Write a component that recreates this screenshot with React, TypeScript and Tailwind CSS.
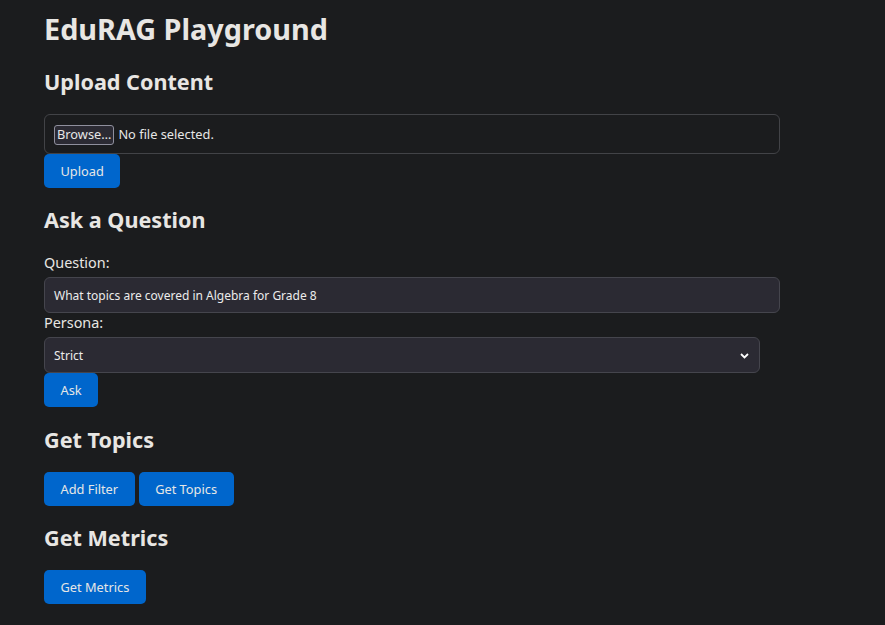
import React from "react";

const font = { fontFamily: '"Noto Sans", "Open Sans", sans-serif' };

function Btn({ children }: { children: React.ReactNode }) {
  return (
    <button className="h-[34px] px-[16.5px] rounded-[5px] bg-[#0066cc] text-[12.8px] text-[#e6e6e6] leading-none">
      {children}
    </button>
  );
}

export default function App() {
  return (
    <div className="min-h-[625px] w-full bg-[#1b1c1e] text-[#e8e6e3]" style={font}>
      <div className="px-[44px] pt-[12px] w-[780px] box-content">
        <h1 className="text-[28.8px] font-bold leading-[34px]">EduRAG Playground</h1>

        <h2 className="mt-[22px] text-[21.6px] font-bold leading-[28px]">Upload Content</h2>
        <div className="mt-[18px] h-[40px] w-[736px] rounded-[6px] border border-[#424347] flex items-center pt-[2px] px-[9px] text-[12.8px]">
          <span className="h-[20px] px-[2px] rounded-[3px] border border-[#8f8f9d] bg-[#2b2a33] flex items-center text-[#e6e6e6]">
            Browse…
          </span>
          <span className="ml-[4px] text-[#e6e6e6]">No file selected.</span>
        </div>
        <Btn>Upload</Btn>

        <h2 className="mt-[18px] text-[21.6px] font-bold leading-[28px]">Ask a Question</h2>
        <div className="mt-[19px] text-[14.4px] leading-[20px]">Question:</div>
        <div className="mt-[4px] h-[36px] w-[736px] rounded-[6px] border border-[#45454d] bg-[#2b2a33] flex items-center pt-[2px] px-[9px] text-[12px] text-[#ececec]">
          What topics are covered in Algebra for Grade 8
        </div>
        <div className="text-[14.4px] leading-[20px]">Persona:</div>
        <div className="mt-[4px] h-[36px] w-[716px] rounded-[6px] border border-[#45454d] bg-[#2b2a33] flex items-center justify-between pt-[2px] pl-[9px] pr-[10px] text-[12px] text-[#ececec]">
          <span>Strict</span>
          <svg width="9" height="6" viewBox="0 0 9 6">
            <path d="M1 1 L4.5 4.5 L8 1" stroke="#ffffff" strokeWidth="1.8" fill="none" />
          </svg>
        </div>
        <Btn>Ask</Btn>

        <h2 className="mt-[19px] text-[21.6px] font-bold leading-[28px]">Get Topics</h2>
        <div className="mt-[18px] flex gap-[4px]">
          <Btn>Add Filter</Btn>
          <Btn>Get Topics</Btn>
        </div>

        <h2 className="mt-[18px] text-[21.6px] font-bold leading-[28px]">Get Metrics</h2>
        <div className="mt-[18px]">
          <Btn>Get Metrics</Btn>
        </div>
      </div>
    </div>
  );
}
